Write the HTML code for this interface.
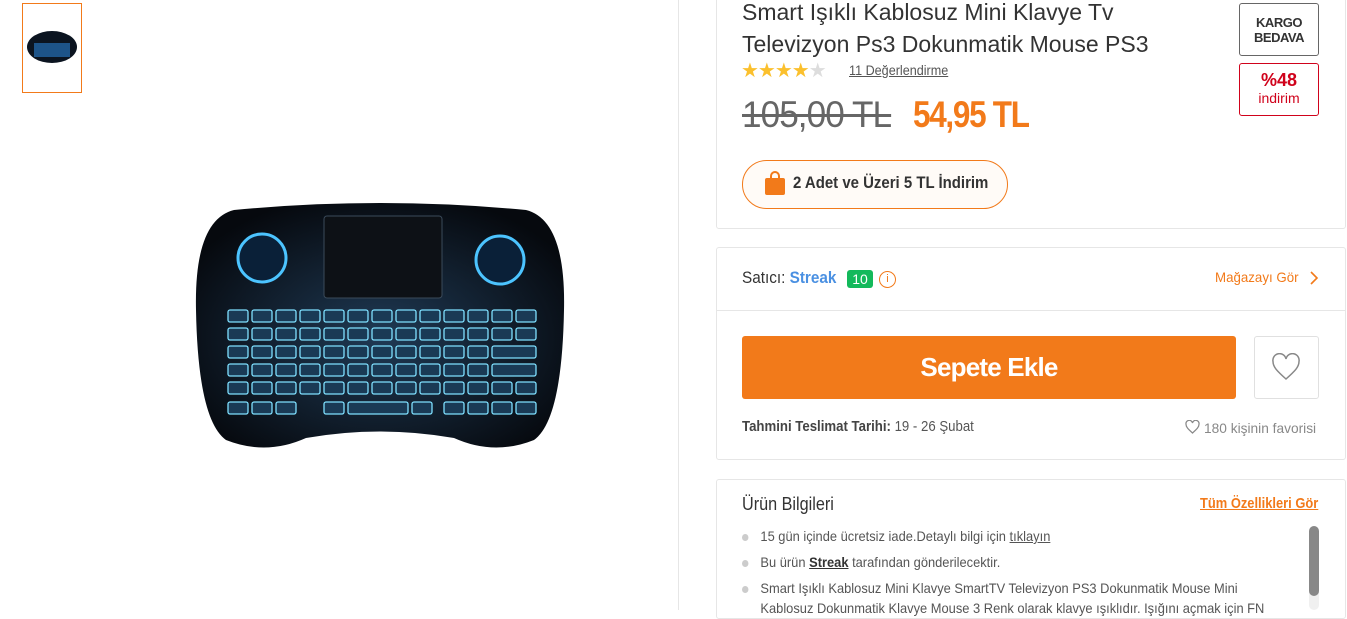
<!DOCTYPE html>
<html><head><meta charset="utf-8"><style>
*{margin:0;padding:0;box-sizing:border-box}
body{width:1347px;height:610px;overflow:hidden;background:#fff;font-family:"Liberation Sans",sans-serif;color:#333;position:relative}
.abs{position:absolute}
.box{position:absolute;border:1px solid #e6e6e6;border-radius:3px;background:#fff}
</style></head><body>
<div class="abs" style="left:22px;top:3px;width:60px;height:90px;border:1px solid #f27a1a"></div>
<svg class="abs" style="left:26px;top:29px" width="52" height="36" viewBox="0 0 52 36"><ellipse cx="26" cy="18" rx="25" ry="16" fill="#0b1420"/><rect x="8" y="14" width="36" height="14" fill="#2a7fd0" opacity=".6"/></svg>
<div class="abs" style="left:678px;top:0;width:1px;height:610px;background:#e6e6e6"></div>
<svg class="abs" style="left:194px;top:200px" width="372" height="256" viewBox="0 0 372 256">
<defs><radialGradient id="g" cx="50%" cy="55%" r="60%"><stop offset="0" stop-color="#1f3a55"/><stop offset="1" stop-color="#06090e"/></radialGradient></defs>
<path d="M40 10 Q186 -4 332 10 Q372 20 370 110 Q368 220 340 240 Q300 256 260 238 Q186 225 112 238 Q72 256 32 240 Q4 220 2 110 Q0 20 40 10Z" fill="url(#g)"/>
<rect x="130" y="16" width="118" height="82" rx="3" fill="#0d1116" stroke="#3a4a5a"/>
<circle cx="68" cy="58" r="24" fill="#0a2038" stroke="#4cc4ff" stroke-width="3"/>
<circle cx="306" cy="60" r="24" fill="#0a2038" stroke="#4cc4ff" stroke-width="3"/>
<g fill="#1a3a55" stroke="#7fe0ff" stroke-width="1.3">
<rect x="34" y="110" width="20" height="12" rx="2"/><rect x="58" y="110" width="20" height="12" rx="2"/><rect x="82" y="110" width="20" height="12" rx="2"/><rect x="106" y="110" width="20" height="12" rx="2"/><rect x="130" y="110" width="20" height="12" rx="2"/><rect x="154" y="110" width="20" height="12" rx="2"/><rect x="178" y="110" width="20" height="12" rx="2"/><rect x="202" y="110" width="20" height="12" rx="2"/><rect x="226" y="110" width="20" height="12" rx="2"/><rect x="250" y="110" width="20" height="12" rx="2"/><rect x="274" y="110" width="20" height="12" rx="2"/><rect x="298" y="110" width="20" height="12" rx="2"/><rect x="322" y="110" width="20" height="12" rx="2"/>
<rect x="34" y="128" width="20" height="12" rx="2"/><rect x="58" y="128" width="20" height="12" rx="2"/><rect x="82" y="128" width="20" height="12" rx="2"/><rect x="106" y="128" width="20" height="12" rx="2"/><rect x="130" y="128" width="20" height="12" rx="2"/><rect x="154" y="128" width="20" height="12" rx="2"/><rect x="178" y="128" width="20" height="12" rx="2"/><rect x="202" y="128" width="20" height="12" rx="2"/><rect x="226" y="128" width="20" height="12" rx="2"/><rect x="250" y="128" width="20" height="12" rx="2"/><rect x="274" y="128" width="20" height="12" rx="2"/><rect x="298" y="128" width="20" height="12" rx="2"/><rect x="322" y="128" width="20" height="12" rx="2"/>
<rect x="34" y="146" width="20" height="12" rx="2"/><rect x="58" y="146" width="20" height="12" rx="2"/><rect x="82" y="146" width="20" height="12" rx="2"/><rect x="106" y="146" width="20" height="12" rx="2"/><rect x="130" y="146" width="20" height="12" rx="2"/><rect x="154" y="146" width="20" height="12" rx="2"/><rect x="178" y="146" width="20" height="12" rx="2"/><rect x="202" y="146" width="20" height="12" rx="2"/><rect x="226" y="146" width="20" height="12" rx="2"/><rect x="250" y="146" width="20" height="12" rx="2"/><rect x="274" y="146" width="20" height="12" rx="2"/><rect x="298" y="146" width="44" height="12" rx="2"/>
<rect x="34" y="164" width="20" height="12" rx="2"/><rect x="58" y="164" width="20" height="12" rx="2"/><rect x="82" y="164" width="20" height="12" rx="2"/><rect x="106" y="164" width="20" height="12" rx="2"/><rect x="130" y="164" width="20" height="12" rx="2"/><rect x="154" y="164" width="20" height="12" rx="2"/><rect x="178" y="164" width="20" height="12" rx="2"/><rect x="202" y="164" width="20" height="12" rx="2"/><rect x="226" y="164" width="20" height="12" rx="2"/><rect x="250" y="164" width="20" height="12" rx="2"/><rect x="274" y="164" width="20" height="12" rx="2"/><rect x="298" y="164" width="44" height="12" rx="2"/>
<rect x="34" y="182" width="20" height="12" rx="2"/><rect x="58" y="182" width="20" height="12" rx="2"/><rect x="82" y="182" width="20" height="12" rx="2"/><rect x="106" y="182" width="20" height="12" rx="2"/><rect x="130" y="182" width="20" height="12" rx="2"/><rect x="154" y="182" width="20" height="12" rx="2"/><rect x="178" y="182" width="20" height="12" rx="2"/><rect x="202" y="182" width="20" height="12" rx="2"/><rect x="226" y="182" width="20" height="12" rx="2"/><rect x="250" y="182" width="20" height="12" rx="2"/><rect x="274" y="182" width="20" height="12" rx="2"/><rect x="298" y="182" width="20" height="12" rx="2"/><rect x="322" y="182" width="20" height="12" rx="2"/>
<rect x="34" y="202" width="20" height="12" rx="2"/><rect x="58" y="202" width="20" height="12" rx="2"/><rect x="82" y="202" width="20" height="12" rx="2"/><rect x="130" y="202" width="20" height="12" rx="2"/><rect x="154" y="202" width="60" height="12" rx="2"/><rect x="218" y="202" width="20" height="12" rx="2"/><rect x="250" y="202" width="20" height="12" rx="2"/><rect x="274" y="202" width="20" height="12" rx="2"/><rect x="298" y="202" width="20" height="12" rx="2"/><rect x="322" y="202" width="20" height="12" rx="2"/>
</g>
</svg>

<div class="box" style="left:716px;top:-5px;width:630px;height:234px"></div>
<div class="abs" style="left:742px;top:-4px;font-size:23px;line-height:32px;color:#333;letter-spacing:0;white-space:nowrap">Smart Işıklı Kablosuz Mini Klavye Tv<br>Televizyon Ps3 Dokunmatik Mouse PS3</div>
<div class="abs" style="left:741px;top:58px;font-size:20px;color:#fbc02d;letter-spacing:-1px">★★★★<span style="color:#ddd">★</span></div>
<div class="abs" style="left:849px;top:62px;font-size:14px;color:#555;text-decoration:underline;transform:scaleX(.9);transform-origin:left;white-space:nowrap">11 Değerlendirme</div>
<div class="abs" style="left:742px;top:94px;font-size:37px;color:#666;text-decoration:line-through;letter-spacing:-1px;transform:scaleX(.95);transform-origin:left;white-space:nowrap">105,00 TL</div>
<div class="abs" style="left:913px;top:94px;font-size:37px;color:#f27a1a;font-weight:bold;letter-spacing:-1.5px;transform:scaleX(.85);transform-origin:left;white-space:nowrap">54,95 TL</div>
<div class="abs" style="left:1239px;top:3px;width:80px;height:53px;border:1px solid #666;border-radius:3px;font-size:13px;font-weight:bold;color:#333;text-align:center;line-height:15px;padding-top:11px;letter-spacing:-.5px">KARGO<br>BEDAVA</div>
<div class="abs" style="left:1239px;top:63px;width:80px;height:53px;border:1px solid #d0021b;border-radius:3px;font-size:15px;color:#d0021b;text-align:center;line-height:17px;padding-top:8px"><b style="font-size:18px">%48</b><br><span style="font-size:14px">indirim</span></div>
<div class="abs" style="left:742px;top:160px;width:266px;height:49px;border:1px solid #f27a1a;border-radius:25px;background:#fffbf7"></div>
<svg class="abs" style="left:763px;top:170px" width="24" height="26" viewBox="0 0 24 26"><path d="M8 9V6a4 4 0 0 1 8 0v3" fill="none" stroke="#f27a1a" stroke-width="2"/><rect x="2" y="8" width="20" height="17" rx="2" fill="#f27a1a"/></svg>
<div class="abs" style="left:793px;top:173px;font-size:17px;font-weight:bold;color:#333;transform:scaleX(.88);transform-origin:left;white-space:nowrap">2 Adet ve Üzeri 5 TL İndirim</div>

<div class="box" style="left:716px;top:247px;width:630px;height:213px"></div>
<div class="abs" style="left:717px;top:310px;width:628px;height:1px;background:#e6e6e6"></div>
<div class="abs" style="left:742px;top:268px;font-size:17px;color:#333;transform:scaleX(.9);transform-origin:left;white-space:nowrap">Satıcı: <b style="color:#4a90e2;font-weight:bold">Streak</b></div>
<div class="abs" style="left:847px;top:270px;width:26px;height:18px;background:#13b95b;border-radius:3px;color:#fff;font-size:14px;text-align:center;line-height:18px">10</div>
<div class="abs" style="left:879px;top:271px;width:17px;height:17px;border:1px solid #f27a1a;border-radius:50%;color:#f27a1a;font-size:11px;text-align:center;line-height:15px">i</div>
<div class="abs" style="left:1215px;top:269px;font-size:14px;color:#f27a1a;transform:scaleX(.95);transform-origin:left;white-space:nowrap">Mağazayı Gör</div>
<svg class="abs" style="left:1308px;top:270px" width="12" height="16"><path d="M3 2l6 6-6 6" fill="none" stroke="#f27a1a" stroke-width="1.6"/></svg>
<div class="abs" style="left:742px;top:336px;width:494px;height:63px;background:#f27a1a;border-radius:3px;color:#fff;font-size:26px;font-weight:bold;text-align:center;line-height:63px;letter-spacing:-.8px">Sepete Ekle</div>
<div class="abs" style="left:1254px;top:336px;width:65px;height:63px;border:1px solid #e0e0e0;border-radius:3px"></div>
<svg class="abs" style="left:1271px;top:353px" width="30" height="28" viewBox="0 0 30 28"><path d="M15 26C6 18 2 14 2 8.5A6.5 6.5 0 0 1 15 6a6.5 6.5 0 0 1 13 2.5C28 14 24 18 15 26Z" fill="none" stroke="#888" stroke-width="1.5"/></svg>
<div class="abs" style="left:742px;top:418px;font-size:15px;color:#555;transform:scaleX(.88);transform-origin:left;white-space:nowrap"><b style="color:#444">Tahmini Teslimat Tarihi:</b> 19 - 26 Şubat</div>
<svg class="abs" style="left:1185px;top:420px" width="15" height="14" viewBox="0 0 30 28"><path d="M15 26C6 18 2 14 2 8.5A6.5 6.5 0 0 1 15 6a6.5 6.5 0 0 1 13 2.5C28 14 24 18 15 26Z" fill="none" stroke="#888" stroke-width="2.5"/></svg>
<div class="abs" style="left:1204px;top:420px;font-size:14px;color:#888;transform:scaleX(.98);transform-origin:left;white-space:nowrap">180 kişinin favorisi</div>

<div class="box" style="left:716px;top:479px;width:630px;height:140px"></div>
<div class="abs" style="left:742px;top:494px;font-size:18px;color:#333;transform:scaleX(.9);transform-origin:left;white-space:nowrap">Ürün Bilgileri</div>
<div class="abs" style="left:1200px;top:495px;font-size:15px;font-weight:bold;color:#f27a1a;text-decoration:underline;transform:scaleX(.86);transform-origin:left;white-space:nowrap">Tüm Özellikleri Gör</div>
<div class="abs" style="left:1309px;top:526px;width:10px;height:84px;background:#f0f0f0;border-radius:5px"></div>
<div class="abs" style="left:1309px;top:526px;width:10px;height:70px;background:#888;border-radius:5px"></div>
<div class="abs" style="left:742px;top:523px;font-size:14px;color:#555;line-height:26px;transform:scaleX(.92);transform-origin:left;white-space:nowrap">
<div><span style="display:inline-block;width:7px;height:7px;border-radius:50%;background:#ccc;vertical-align:middle;margin-right:13px"></span>15 gün içinde ücretsiz iade.Detaylı bilgi için <u>tıklayın</u></div>
<div><span style="display:inline-block;width:7px;height:7px;border-radius:50%;background:#ccc;vertical-align:middle;margin-right:13px"></span>Bu ürün <u style="color:#333;font-weight:bold">Streak</u> tarafından gönderilecektir.</div>
<div style="line-height:20px;margin-top:3px"><span style="display:inline-block;width:7px;height:7px;border-radius:50%;background:#ccc;vertical-align:middle;margin-right:13px"></span>Smart Işıklı Kablosuz Mini Klavye SmartTV Televizyon PS3 Dokunmatik Mouse Mini<br><span style="padding-left:20px">Kablosuz Dokunmatik Klavye Mouse 3 Renk olarak klavye ışıklıdır. Işığını açmak için FN</span></div>
</div>
</body></html>
